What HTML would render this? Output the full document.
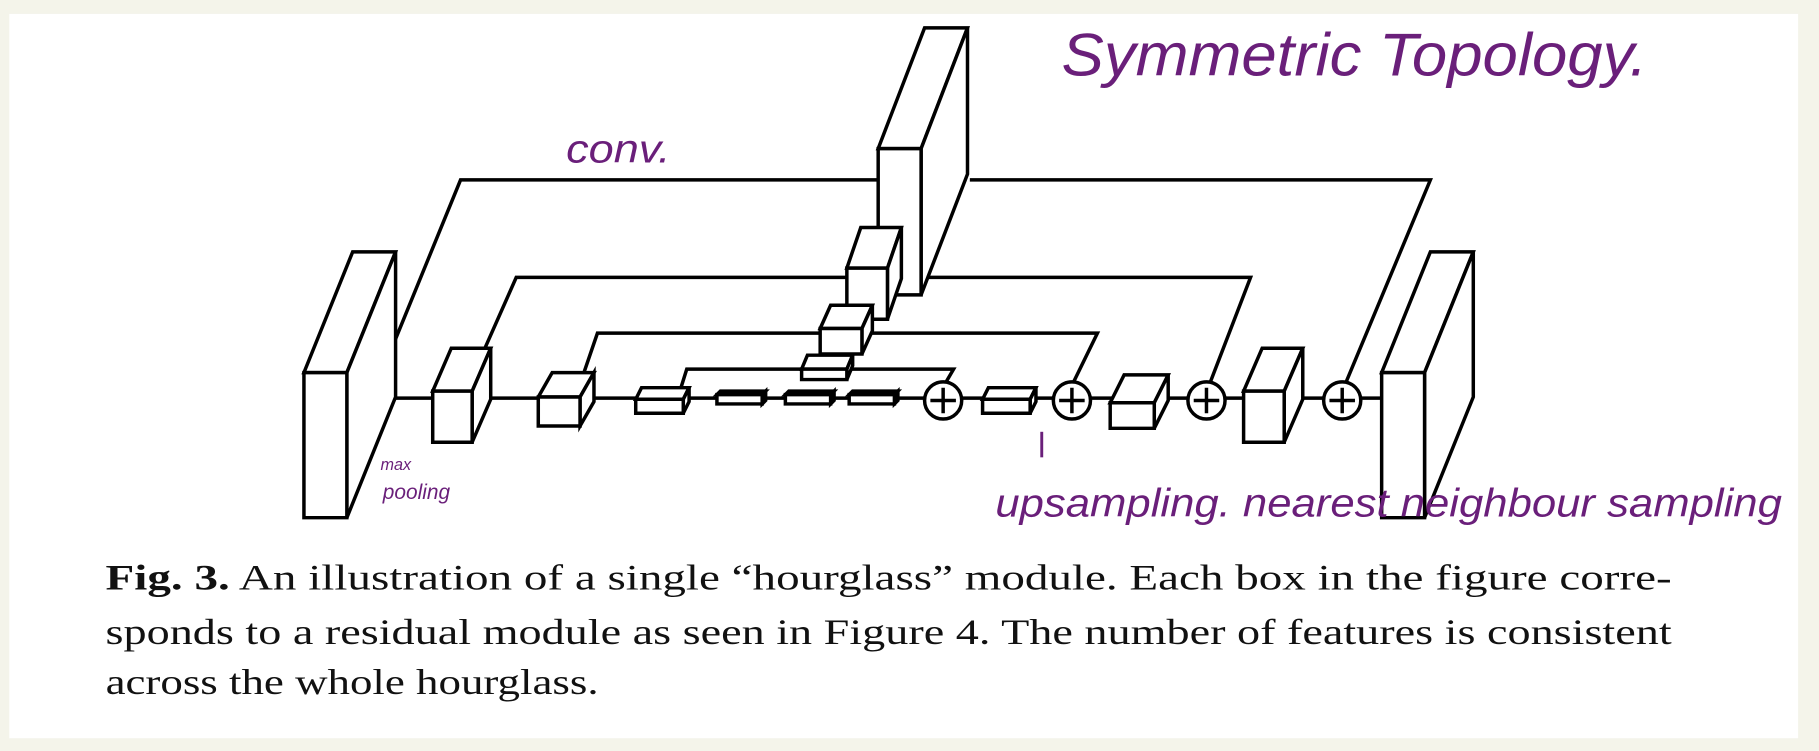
<!DOCTYPE html>
<html><head><meta charset="utf-8"><style>
html,body{margin:0;padding:0;background:#f4f4ea;}
svg{display:block}
</style></head><body>
<svg id="s" width="1819" height="751" viewBox="0 0 1568 647" preserveAspectRatio="none" xmlns="http://www.w3.org/2000/svg">
<rect x="0" y="0" width="1568" height="647" fill="#f4f4ea"/>
<rect x="8" y="12" width="1542" height="624" fill="#ffffff"/>
<g fill="none" stroke="#000" stroke-width="3" stroke-linejoin="miter">
<polyline points="341,343 1191,343"/>
<polyline points="341,292 397,155 757,155"/>
<polyline points="836,155 1233,155 1160,330"/>
<polyline points="418,300 445,239 1078,239 1043,330"/>
<polyline points="503,322 515,287 946,287 925,330"/>
<polyline points="587,334 592,318 822,318 815,330"/>
</g>
<g id="boxes" fill="#fff" stroke="#000" stroke-width="3" stroke-linejoin="miter"></g>
<g fill="#fff" stroke="#000" stroke-width="3">
<circle cx="813" cy="345" r="16"/><circle cx="924" cy="345" r="16"/><circle cx="1040" cy="345" r="16"/><circle cx="1157" cy="345" r="16"/>
<path d="M813 334v22M802 345h22M924 334v22M913 345h22M1040 334v22M1029 345h22M1157 334v22M1146 345h22" fill="none"/>
</g>
<g font-family="'Liberation Serif',serif" font-size="31" fill="#111">
<text x="91" y="508" textLength="1350" lengthAdjust="spacingAndGlyphs"><tspan font-weight="bold">Fig. 3.</tspan> An illustration of a single “hourglass” module. Each box in the figure corre-</text>
<text x="91" y="555" textLength="1350" lengthAdjust="spacingAndGlyphs">sponds to a residual module as seen in Figure 4. The number of features is consistent</text>
<text x="91" y="598" textLength="425" lengthAdjust="spacingAndGlyphs">across the whole hourglass.</text>
</g>
<g fill="#6a1f7a" font-family="'Liberation Sans',sans-serif" font-style="italic">
<text x="915" y="65" font-size="52" textLength="505" lengthAdjust="spacingAndGlyphs">Symmetric Topology.</text>
<text x="488" y="140" font-size="34" textLength="90" lengthAdjust="spacingAndGlyphs">conv.</text>
<text x="328" y="405" font-size="14">max</text>
<text x="330" y="430" font-size="18">pooling</text>
<text x="858" y="445" font-size="34" textLength="678" lengthAdjust="spacingAndGlyphs">upsampling. nearest neighbour sampling</text>
</g>
<path d="M898 372v22" stroke="#6a1f7a" stroke-width="2.5"/>
</svg>
<script>
var g=document.getElementById('boxes');
function box(x,y,w,h,dx,dy){
 var p=function(a){return a.map(function(q){return q.join(',')}).join(' ')};
 var add=function(pts){var e=document.createElementNS('http://www.w3.org/2000/svg','polygon');e.setAttribute('points',p(pts));g.appendChild(e);};
 add([[x,y],[x+dx,y+dy],[x+w+dx,y+dy],[x+w,y]]);
 add([[x+w,y],[x+w+dx,y+dy],[x+w+dx,y+h+dy],[x+w,y+h]]);
 add([[x,y],[x+w,y],[x+w,y+h],[x,y+h]]);
}
box(262,321,37,125,42,-104);
box(1191,321,37,125,42,-104);
box(757,128,37,126,40,-104);
box(730,231,35,44,12,-35);
box(707,283,36,22,9,-20);
box(691,318,39,9,5,-12);
box(373,337,34,44,16,-37);
box(464,342,36,25,12,-21);
box(548,344,41,12,5,-10);
box(618,340,39,8,3,-3);
box(677,340,39,8,3,-3);
box(732,340,39,8,3,-3);
box(847,344,41,12,5,-10);
box(957,347,38,22,12,-24);
box(1072,337,35,44,16,-37);
</script>
</body></html>
